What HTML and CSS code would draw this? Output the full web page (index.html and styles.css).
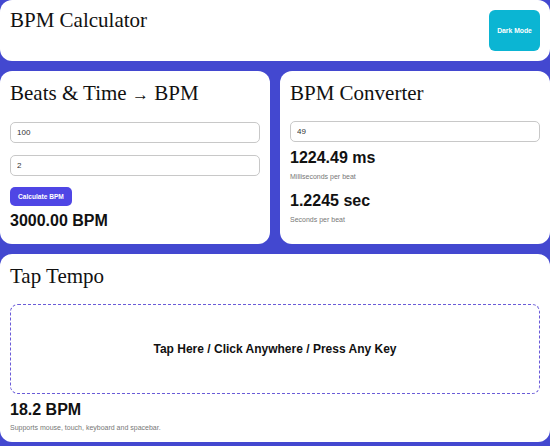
FILE: index.html
```html
<!DOCTYPE html>
<html lang="en">
<head>
  <meta charset="UTF-8" />
  <meta name="viewport" content="width=device-width, initial-scale=1.0"/>
  <title>BPM Calculator</title>
  <link rel="stylesheet" href="styles.css">
</head>
<body>
  <div class="page">
    <!-- header -->
    <header class="card header">
      <h1>BPM Calculator</h1>
      <button class="mode-btn" type="button">Dark Mode</button>
    </header>

    <div class="row">
      <!-- beats & time -->
      <section class="card">
        <h2>Beats &amp; Time <span class="arrow">→</span> BPM</h2>
        <input type="number" class="field" value="100">
        <input type="number" class="field" value="2">
        <button class="calc-btn" type="button">Calculate BPM</button>
        <p class="result">3000.00 BPM</p>
      </section>

      <!-- converter -->
      <section class="card">
        <h2>BPM Converter</h2>
        <input type="number" class="field" value="49">
        <p class="result">1224.49 ms</p>
        <p class="hint">Milliseconds per beat</p>
        <p class="result">1.2245 sec</p>
        <p class="hint">Seconds per beat</p>
      </section>
    </div>

    <!-- tap tempo -->
    <section class="card tap-card">
      <h2>Tap Tempo</h2>
      <div class="tap-area">Tap Here / Click Anywhere / Press Any Key</div>
      <p class="result tap-result">18.2 BPM</p>
      <p class="hint">Supports mouse, touch, keyboard and spacebar.</p>
    </section>
  </div>
</body>
</html>
```

FILE: styles.css
```css
body {
  margin: 0;
  background-color: #4348d0;
  font-family: 'Liberation Sans', Arial, sans-serif;
  color: #111;
}

.page {
  display: flex;
  flex-direction: column;
  gap: 10px;
}

.card {
  background-color: #fff;
  border-radius: 12px;
  padding: 10px 10px 14px;
  display: flex;
  flex-direction: column;
  align-items: flex-start;
}

.header {
  flex-direction: row;
  justify-content: space-between;
  padding: 10px;
}

h1, h2 {
  font-family: 'Liberation Serif', 'Times New Roman', serif;
  font-weight: normal;
  font-size: 21px;
  line-height: 25px;
  margin: 0;
  color: #111;
}

h1 {
  margin-top: -2px;
}

h2 {
  margin-bottom: 15px;
}

h2 .arrow {
  font-size: 17px;
}

.mode-btn {
  width: 51px;
  height: 41px;
  padding: 0;
  border: none;
  border-radius: 6px;
  background-color: #0bb5d3;
  color: #fff;
  font-family: 'Liberation Sans', Arial, sans-serif;
  font-size: 6.8px;
  font-weight: bold;
}

.row {
  display: grid;
  grid-template-columns: 1fr 1fr;
  gap: 10px;
}

.field {
  box-sizing: border-box;
  width: 100%;
  height: 21px;
  padding: 0 6px;
  border: 1px solid #c8c8c8;
  border-radius: 5px;
  font-family: 'Liberation Sans', Arial, sans-serif;
  font-size: 8px;
  color: #333;
  outline: none;
  margin-bottom: 12px;
  -moz-appearance: textfield;
}

.field::-webkit-inner-spin-button,
.field::-webkit-outer-spin-button {
  -webkit-appearance: none;
  margin: 0;
}

.field + .field {
  margin-bottom: 11px;
}

.calc-btn {
  height: 19px;
  padding: 0 8px;
  border: none;
  border-radius: 5px;
  background-color: #4f46e5;
  color: #fff;
  font-family: 'Liberation Sans', Arial, sans-serif;
  font-size: 6.6px;
  font-weight: bold;
}

.result {
  margin: 6px 0 0;
  font-size: 16px;
  font-weight: bold;
  line-height: 18px;
}

.field + .result {
  margin-top: -5px;
}

.hint {
  margin: 6px 0 5px;
  font-size: 7px;
  line-height: 8px;
  color: #777;
}

.tap-card {
  padding-bottom: 10px;
}

.tap-area {
  box-sizing: border-box;
  width: 100%;
  height: 90px;
  border: 1px dashed #6a5bd8;
  border-radius: 8px;
  display: flex;
  align-items: center;
  justify-content: center;
  font-size: 12px;
  font-weight: bold;
  color: #111;
}

.tap-result {
  margin-top: 7px;
}

.tap-card .hint {
  margin: 5px 0 0;
}
```
